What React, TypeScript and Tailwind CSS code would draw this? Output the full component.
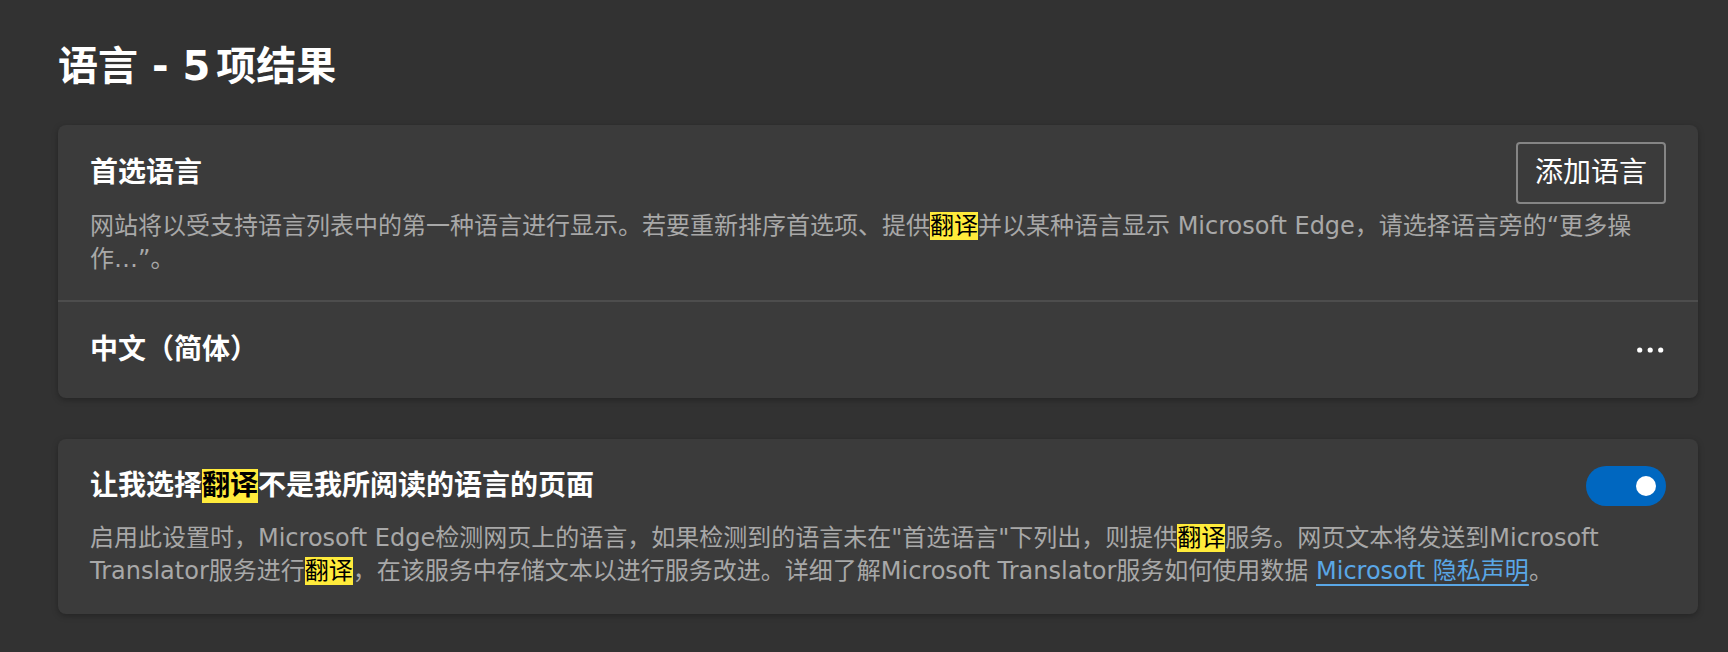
import type { ReactNode } from "react";

function Mark({ children, heading }: { children: ReactNode; heading?: boolean }) {
  return (
    <span
      className={
        heading
          ? "inline-block bg-[#ffeb3b] leading-[34px] text-black"
          : "bg-[#ffeb3b] text-black"
      }
    >
      {children}
    </span>
  );
}

function Toggle() {
  return (
    <button
      role="switch"
      aria-checked="true"
      className="relative h-10 w-20 shrink-0 rounded-full bg-[#0067c0]"
    >
      <span className="absolute top-1/2 right-[10px] size-5 -translate-y-1/2 rounded-full bg-white" />
    </button>
  );
}

function MoreIcon() {
  return (
    <svg width="27" height="8" viewBox="0 0 27 8" fill="#ffffff">
      <circle cx="2.7" cy="4" r="2.6" />
      <circle cx="13.2" cy="4" r="2.6" />
      <circle cx="23.7" cy="4" r="2.6" />
    </svg>
  );
}

export default function App() {
  return (
    <div className="min-h-screen bg-[#323232] font-['DejaVu_Sans','Noto_Sans_CJK_SC',sans-serif] text-white">
      <div className="ml-[58px] w-[1640px] pt-[38px] pb-[37px]">
        <h1 className="text-[40px] leading-[56px] font-bold">
          语言 - <span className="[word-spacing:-8px]">5 </span>项结果
        </h1>

        {/* preferred languages */}
        <section className="mt-[31px] rounded-lg bg-[#3b3b3b] shadow-[0_2px_6px_rgba(0,0,0,0.28)]">
          <div className="px-8 pt-[17px] pb-[24px]">
            <div className="flex h-[62px] items-center justify-between">
              <h2 className="text-[28px] leading-[34px] font-bold">首选语言</h2>
              <button className="h-[62px] rounded-[4px] border-2 border-[#858585] px-[17px] text-[28px] leading-[58px]">
                添加语言
              </button>
            </div>
            <p className="mt-[6px] text-[24px] leading-[33px] text-[#a8a8a8]">
              网站将以受支持语言列表中的第一种语言进行显示。若要重新排序首选项、提供<Mark>翻译</Mark>并以某种语言显示 Microsoft Edge，请选择语言旁的“更多操作…”。
            </p>
          </div>
          <div className="h-[2px] bg-[#4d4d4d]" />
          <div className="flex h-[96px] items-center justify-between px-8">
            <span className="text-[28px] leading-[34px] font-bold">中文（简体）</span>
            <button aria-label="更多操作" className="mr-[2px] flex items-center">
              <MoreIcon />
            </button>
          </div>
        </section>

        {/* offer to translate */}
        <section className="mt-[41px] rounded-lg bg-[#3b3b3b] px-8 pt-[30px] pb-[26px] shadow-[0_2px_6px_rgba(0,0,0,0.28)]">
          <div className="flex h-[34px] items-center justify-between">
            <h2 className="text-[28px] leading-[34px] font-bold">
              让我选择<Mark heading>翻译</Mark>不是我所阅读的语言的页面
            </h2>
            <Toggle />
          </div>
          <p className="mt-[19px] text-[24px] leading-[33px] text-[#a8a8a8]">
            启用此设置时，Microsoft Edge检测网页上的语言，如果检测到的语言未在"首选语言"下列出，则提供<Mark>翻译</Mark>服务。网页文本将发送到Microsoft Translator服务进行<Mark>翻译</Mark>，在该服务中存储文本以进行服务改进。详细了解Microsoft Translator服务如何使用数据{" "}
            <a href="#" className="text-[#5aa7e6] underline decoration-2 underline-offset-[5px]">
              Microsoft 隐私声明
            </a>
            。
          </p>
        </section>
      </div>
    </div>
  );
}
